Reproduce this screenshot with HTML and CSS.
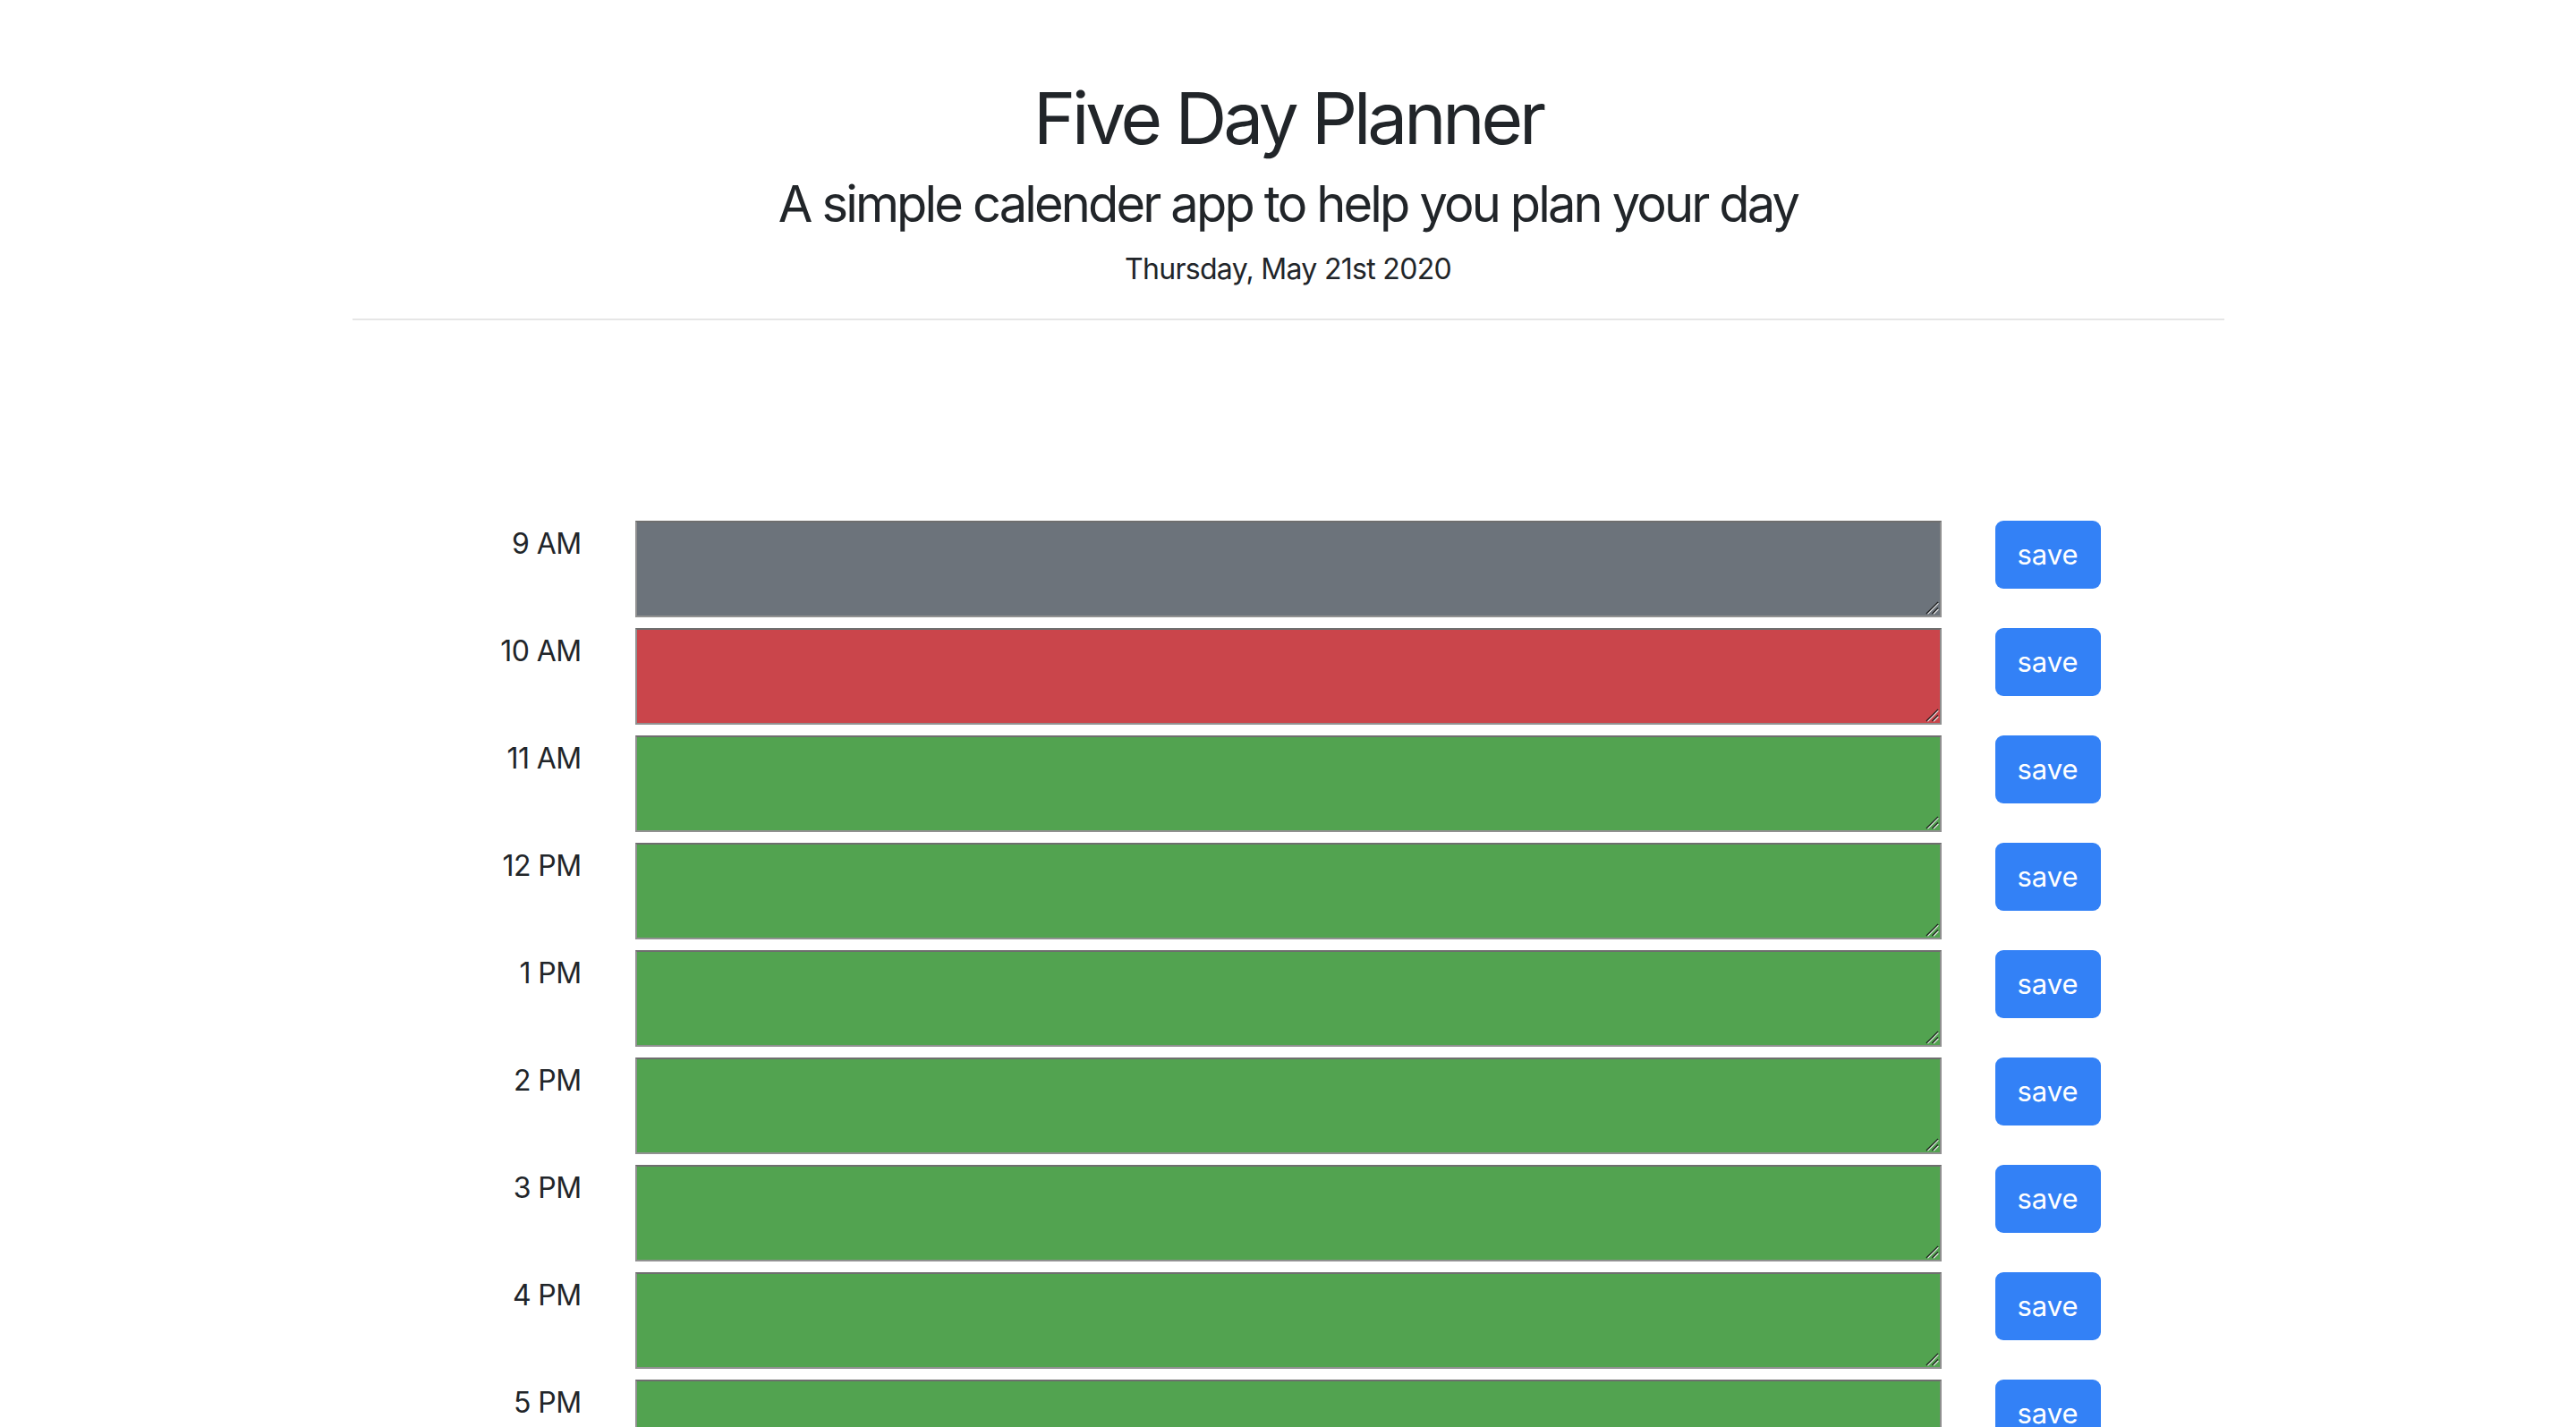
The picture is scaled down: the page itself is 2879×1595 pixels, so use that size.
FILE: index.html
```html
<!DOCTYPE html>
<html lang="en">
<head>
<meta charset="utf-8">
<title>Five Day Planner</title>
<link rel="stylesheet" href="styles.css">
</head>
<body>
<header class="jumbotron">
  <h1 class="title">Five Day Planner</h1>
  <p class="lead">A simple calender app to help you plan your day</p>
  <p class="current-day">Thursday, May 21st 2020</p>
</header>
<hr class="divider">
<main class="planner">
  <div class="time-block">
    <div class="hour">9 AM</div>
    <div class="field"><textarea class="description past"></textarea><svg class="grip" viewBox="0 0 16 16"><path d="M1 15L15 1M8 15L15 8" stroke="#1e1e1e" stroke-width="1.4"/><path d="M2.6 15.4L15.4 2.6M9.6 15.4L15.4 9.6" stroke="#e8e8e8" stroke-width="1.2"/></svg></div>
    <button class="save-btn">save</button>
  </div>
  <div class="time-block">
    <div class="hour">10 AM</div>
    <div class="field"><textarea class="description present"></textarea><svg class="grip" viewBox="0 0 16 16"><path d="M1 15L15 1M8 15L15 8" stroke="#1e1e1e" stroke-width="1.4"/><path d="M2.6 15.4L15.4 2.6M9.6 15.4L15.4 9.6" stroke="#e8e8e8" stroke-width="1.2"/></svg></div>
    <button class="save-btn">save</button>
  </div>
  <div class="time-block">
    <div class="hour">11 AM</div>
    <div class="field"><textarea class="description future"></textarea><svg class="grip" viewBox="0 0 16 16"><path d="M1 15L15 1M8 15L15 8" stroke="#1e1e1e" stroke-width="1.4"/><path d="M2.6 15.4L15.4 2.6M9.6 15.4L15.4 9.6" stroke="#e8e8e8" stroke-width="1.2"/></svg></div>
    <button class="save-btn">save</button>
  </div>
  <div class="time-block">
    <div class="hour">12 PM</div>
    <div class="field"><textarea class="description future"></textarea><svg class="grip" viewBox="0 0 16 16"><path d="M1 15L15 1M8 15L15 8" stroke="#1e1e1e" stroke-width="1.4"/><path d="M2.6 15.4L15.4 2.6M9.6 15.4L15.4 9.6" stroke="#e8e8e8" stroke-width="1.2"/></svg></div>
    <button class="save-btn">save</button>
  </div>
  <div class="time-block">
    <div class="hour">1 PM</div>
    <div class="field"><textarea class="description future"></textarea><svg class="grip" viewBox="0 0 16 16"><path d="M1 15L15 1M8 15L15 8" stroke="#1e1e1e" stroke-width="1.4"/><path d="M2.6 15.4L15.4 2.6M9.6 15.4L15.4 9.6" stroke="#e8e8e8" stroke-width="1.2"/></svg></div>
    <button class="save-btn">save</button>
  </div>
  <div class="time-block">
    <div class="hour">2 PM</div>
    <div class="field"><textarea class="description future"></textarea><svg class="grip" viewBox="0 0 16 16"><path d="M1 15L15 1M8 15L15 8" stroke="#1e1e1e" stroke-width="1.4"/><path d="M2.6 15.4L15.4 2.6M9.6 15.4L15.4 9.6" stroke="#e8e8e8" stroke-width="1.2"/></svg></div>
    <button class="save-btn">save</button>
  </div>
  <div class="time-block">
    <div class="hour">3 PM</div>
    <div class="field"><textarea class="description future"></textarea><svg class="grip" viewBox="0 0 16 16"><path d="M1 15L15 1M8 15L15 8" stroke="#1e1e1e" stroke-width="1.4"/><path d="M2.6 15.4L15.4 2.6M9.6 15.4L15.4 9.6" stroke="#e8e8e8" stroke-width="1.2"/></svg></div>
    <button class="save-btn">save</button>
  </div>
  <div class="time-block">
    <div class="hour">4 PM</div>
    <div class="field"><textarea class="description future"></textarea><svg class="grip" viewBox="0 0 16 16"><path d="M1 15L15 1M8 15L15 8" stroke="#1e1e1e" stroke-width="1.4"/><path d="M2.6 15.4L15.4 2.6M9.6 15.4L15.4 9.6" stroke="#e8e8e8" stroke-width="1.2"/></svg></div>
    <button class="save-btn">save</button>
  </div>
  <div class="time-block">
    <div class="hour">5 PM</div>
    <div class="field"><textarea class="description future"></textarea><svg class="grip" viewBox="0 0 16 16"><path d="M1 15L15 1M8 15L15 8" stroke="#1e1e1e" stroke-width="1.4"/><path d="M2.6 15.4L15.4 2.6M9.6 15.4L15.4 9.6" stroke="#e8e8e8" stroke-width="1.2"/></svg></div>
    <button class="save-btn">save</button>
  </div>
</main>
</body>
</html>
```
FILE: styles.css
```css
* { box-sizing: border-box; }
html, body { margin: 0; padding: 0; background: #ffffff; }
body {
  font-family: "Inter", "Roboto", "Liberation Sans", sans-serif;
  color: #212529;
}
.jumbotron {
  text-align: center;
  padding-top: 84px;
}
.title {
  margin: 0;
  font-size: 80px;
  line-height: 96px;
  font-weight: 400;
  letter-spacing: -4.1px;
}
.lead {
  margin: 15px 0 0;
  font-size: 56px;
  line-height: 67px;
  font-weight: 400;
  letter-spacing: -2.85px;
}
.current-day {
  margin: 15px 0 0;
  font-size: 32px;
  line-height: 48px;
  letter-spacing: -0.7px;
}
.divider {
  width: 2092px;
  margin: 31px auto 0;
  border: 0;
  border-top: 2px solid #e6e6e6;
  height: 0;
}
.planner {
  margin-top: 224px;
}
.time-block {
  display: grid;
  grid-template-columns: 1fr 1460px 1fr;
  column-gap: 60px;
  align-items: start;
  margin-bottom: 12px;
}
.hour {
  text-align: right;
  font-size: 32px;
  line-height: 48px;
  padding-top: 2px;
  letter-spacing: -0.6px;
  color: #212529;
}
.field {
  position: relative;
  width: 1460px;
  height: 108px;
}
.description {
  display: block;
  width: 1460px;
  height: 108px;
  margin: 0;
  padding: 4px;
  border-style: solid;
  border-width: 2px;
  border-color: #6e6e6e #8f8f8f #919191 #909090;
  font-family: inherit;
  font-size: 26px;
  color: #212529;
  resize: none;
}
.grip {
  position: absolute;
  right: 3px;
  bottom: 3px;
  width: 15px;
  height: 15px;
  pointer-events: none;
}
.past { background-color: #6c737b; }
.present { background-color: #ca454b; }
.future { background-color: #52a350; }
.save-btn {
  justify-self: start;
  width: 118px;
  height: 76px;
  border: 0;
  border-radius: 9px;
  background-color: #3381f6;
  color: #ffffff;
  font-family: inherit;
  font-size: 31px;
  line-height: 48px;
  padding: 0 0 1px;
  cursor: pointer;
}
```
